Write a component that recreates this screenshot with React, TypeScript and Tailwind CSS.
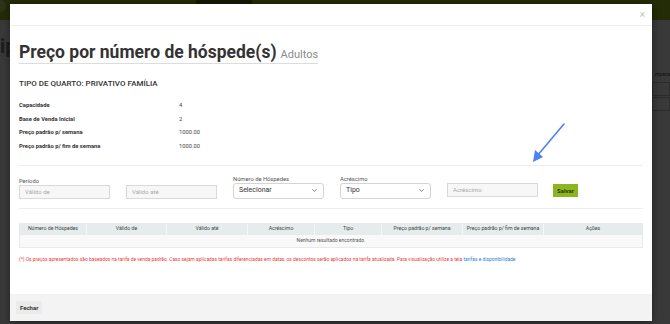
import { ChevronDown } from 'lucide-react';

const rows = [
  { label: 'Capacidade', value: '4' },
  { label: 'Base de Venda Inicial', value: '2' },
  { label: 'Preço padrão p/ semana', value: '1000.00' },
  { label: 'Preço padrão p/ fim de semana', value: '1000.00' },
];

const columns = [
  { title: 'Número de Hóspedes', w: 'w-[67px]' },
  { title: 'Válido de', w: 'w-[80px]' },
  { title: 'Válido até', w: 'w-[81px]' },
  { title: 'Acréscimo', w: 'w-[67px]' },
  { title: 'Tipo', w: 'w-[67px]' },
  { title: 'Preço padrão p/ semana', w: 'w-[81px]' },
  { title: 'Preço padrão p/ fim de semana', w: 'w-[81px]' },
  { title: 'Ações', w: 'flex-1' },
];

function TextInput({ placeholder }: { placeholder: string }) {
  return (
    <div className="w-[91px] h-[14px] border border-[#d9d9d9] bg-[#f7f7f7] flex items-center px-[5px] text-[6px] text-[#aaa]">
      {placeholder}
    </div>
  );
}

function Select({ value }: { value: string }) {
  return (
    <div className="w-[91px] h-[16px] border border-[#d4d4d4] rounded-[3px] bg-white flex items-center justify-between px-[5px] text-[7px] text-[#333]">
      <span>{value}</span>
      <ChevronDown size={7} strokeWidth={2.5} className="text-[#555]" />
    </div>
  );
}

export default function App() {
  return (
    <div
      className="relative w-[670px] h-[324px] overflow-hidden bg-[#393939]"
      style={{ fontFamily: 'Roboto, "Liberation Sans", sans-serif' }}
    >
      {/* page behind overlay */}
      <div className="h-[20px] bg-[#232b07] flex">
        <div className="w-[12px] h-[12px] rounded-full bg-[#2f3318] -ml-[6px]" />
        <div className="ml-[190px] w-[56px] h-[5px] bg-[#141a02]" />
      </div>
      <div className="flex justify-between">
        <div className="text-[20px] font-bold text-[#1d1d1d] mt-[16px] leading-none">ip</div>
        <div className="flex flex-col items-end mt-[51px] text-[5px] text-[#111]">
          <span>mpeza</span>
          <div className="w-[18px] h-[14px] border border-[#2c2c2c] mt-[3px]" />
          <div className="w-[18px] h-[14px] border border-[#2c2c2c] mt-[1px]" />
        </div>
      </div>

      {/* modal */}
      <div className="absolute left-[10px] top-[4px] w-[642px] h-[317px] bg-white flex flex-col shadow-[0_2px_8px_rgba(0,0,0,0.4)]">
        <div className="h-[22px] border-b border-[#eeeeee] flex items-center justify-end pr-[7px] shrink-0">
          <span className="text-[10px] text-[#c4c4c4] leading-none">×</span>
        </div>

        <div className="flex-1 px-[9px] text-[#333]">
          <div className="mt-[17px] flex items-end w-fit border-b border-[#dcdcdc] pb-[1px]">
            <span className="text-[17.5px] font-bold leading-[19px] text-[#333]">
              Preço por número de hóspede(s)
            </span>
            <span className="ml-[4px] text-[11px] text-[#8a8a8a] leading-none mb-[2px]">Adultos</span>
          </div>

          <div className="mt-[16px] text-[8px] font-medium text-[#333] leading-none">
            TIPO DE QUARTO: PRIVATIVO FAMÍLIA
          </div>

          <div className="mt-[14px] flex flex-col gap-[6.5px]">
            {rows.map((r) => (
              <div key={r.label} className="flex text-[5.8px] leading-[7px]">
                <span className="w-[160px] font-bold text-[#333]">{r.label}</span>
                <span className="text-[#444]">{r.value}</span>
              </div>
            ))}
          </div>

          <div className="mt-[15px] border-t border-[#eeeeee]" />

          <div className="mt-[10px] flex items-end">
            <div className="flex flex-col">
              <span className="text-[5.8px] text-[#555] leading-[7px]">Período</span>
              <div className="flex gap-[16px]">
                <TextInput placeholder="Válido de" />
                <TextInput placeholder="Válido até" />
              </div>
            </div>
            <div className="flex flex-col ml-[16px]">
              <span className="text-[5.8px] text-[#555] leading-[7px]">Número de Hóspedes</span>
              <Select value="Selecionar" />
            </div>
            <div className="flex flex-col ml-[16px]">
              <span className="text-[5.8px] text-[#555] leading-[7px]">Acréscimo</span>
              <Select value="Tipo" />
            </div>
            <div className="ml-[16px] mb-[2px]">
              <TextInput placeholder="Acréscimo" />
            </div>
            <div className="ml-[15px] mb-[2px] h-[13px] px-[4px] bg-[#8cb51f] flex items-center text-[6px] font-bold text-[#2b3a07]">
              Salvar
            </div>
          </div>

          <div className="mt-[9px] border-t border-[#eeeeee]" />

          <div className="mt-[14px] border border-[#e6ebeb]">
            <div className="flex h-[11px] bg-[#e6ecec]">
              {columns.map((c, i) => (
                <div
                  key={c.title}
                  className={`${c.w} flex items-center justify-center text-[5.2px] text-[#444] whitespace-nowrap ${i < columns.length - 1 ? 'border-r border-[#f5f7f7]' : ''}`}
                >
                  {c.title}
                </div>
              ))}
            </div>
            <div className="h-[12px] bg-[#f9f9f9] flex items-center justify-center text-[5px] text-[#555]">
              Nenhum resultado encontrado.
            </div>
          </div>

          <div className="mt-[9px] text-[4.9px] text-[#e83a3a] leading-none whitespace-nowrap">
            (*) Os preços apresentados são baseados na tarifa de venda padrão. Caso sejam aplicadas tarifas diferenciadas em datas, os descontos serão aplicados na tarifa atualizada. Para visualização utilize a tela{' '}
            <span className="text-[#2f7ed8]">tarifas e disponibilidade</span>
          </div>
        </div>

        <div className="h-[27px] bg-[#f3f3f3] flex items-center px-[6px] shrink-0">
          <div className="h-[13px] px-[4px] bg-[#ebebeb] flex items-center text-[6px] font-bold text-[#333]">
            Fechar
          </div>
        </div>
      </div>

      {/* blue annotation arrow */}
      <svg className="absolute left-[528px] top-[121px]" width="40" height="44" viewBox="0 0 40 44">
        <line x1="36" y1="3" x2="9" y2="35" stroke="#4d82f3" strokeWidth="1.6" strokeLinecap="round" />
        <path d="M5 41 L7 29 L15 36 Z" fill="#4d82f3" />
      </svg>
    </div>
  );
}
